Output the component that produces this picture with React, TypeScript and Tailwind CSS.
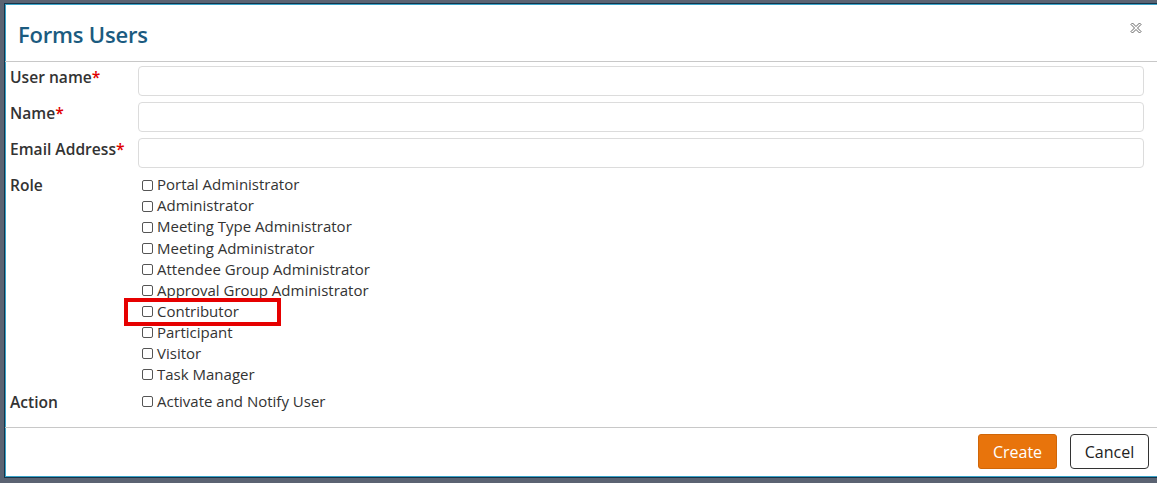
const roles = [
  "Portal Administrator",
  "Administrator",
  "Meeting Type Administrator",
  "Meeting Administrator",
  "Attendee Group Administrator",
  "Approval Group Administrator",
  "Contributor",
  "Participant",
  "Visitor",
  "Task Manager",
];

const Box = () => (
  <span className="inline-block w-[11px] h-[11px] border border-[#555] rounded-[2px] bg-white mr-[4px] mt-[1px] shrink-0" />
);

// outlined thick X, like the old jQuery UI close glyph
const CloseIcon = () => (
  <svg width="12" height="12" viewBox="0 0 12 12" fill="#fff" stroke="#666" strokeWidth="1" strokeLinejoin="round">
    <path d="M1 2.5 L2.5 1 L6 4.5 L9.5 1 L11 2.5 L7.5 6 L11 9.5 L9.5 11 L6 7.5 L2.5 11 L1 9.5 L4.5 6 Z" />
  </svg>
);

const Field = ({ label }: { label: string }) => (
  <div className="flex items-center h-[30px] mb-[6px]">
    <div className="w-[128px] font-semibold text-[15.6px] text-[#333] -mt-[6px]">
      {label}
      <span className="text-[#e00000]">*</span>
    </div>
    <div className="flex-1 h-[30px] border border-[#dcdcdc] rounded-[4px] mr-[19px]" />
  </div>
);

export default function App() {
  return (
    <div
      className="w-[1157px] h-[483px] bg-[#5b6372] overflow-hidden pt-[3px] pl-[4px]"
      style={{ fontFamily: '"Open Sans", "Noto Sans", sans-serif' }}
    >
      <div className="w-[1160px] h-[475px] bg-white border border-[#16344a] ring-1 ring-inset ring-[#3aa3c9] flex flex-col">
        {/* header */}
        <div className="h-[58px] flex items-center justify-between pl-[13px] pr-[14px] border-b border-[#c8c8c8] shrink-0">
          <h1 className="text-[22px] text-[#1b5b80] font-semibold tracking-[-0.2px] mt-[4px]">Forms Users</h1>
          <div className="mr-[7px] -mt-[10px]">
            <CloseIcon />
          </div>
        </div>

        {/* body */}
        <div className="pl-[5px] pt-[4px] flex-1">
          <Field label="User name" />
          <Field label="Name" />
          <Field label="Email Address" />

          <div className="flex mt-[6px]">
            <div className="w-[128px] font-semibold text-[15.6px] text-[#333] leading-[21px] pt-[1px]">Role</div>
            <div className="flex flex-col pl-[4px]">
              {roles.map((r) => (
                <div key={r} className="relative flex items-center h-[21.1px] text-[15px] text-[#333]">
                  {r === "Contributor" && (
                    <div className="absolute left-[-18px] top-[-3px] w-[157px] h-[28px] border-[4px] border-[#e60000]" />
                  )}
                  <Box />
                  <span>{r}</span>
                </div>
              ))}
            </div>
          </div>

          <div className="flex mt-[6px]">
            <div className="w-[128px] font-semibold text-[15.6px] text-[#333] leading-[21px] pt-[1px]">Action</div>
            <div className="flex items-center h-[21px] text-[15px] text-[#333] pl-[4px]">
              <Box />
              <span>Activate and Notify User</span>
            </div>
          </div>
        </div>

        {/* footer */}
        <div className="h-[50px] border-t border-[#c8c8c8] flex items-start justify-end gap-[13px] pt-[6px] pr-[14px] shrink-0">
          <button className="w-[79px] h-[35px] rounded-[3px] bg-[#e8740c] border border-[#d06608] text-white text-[16px]">
            Create
          </button>
          <button className="w-[79px] h-[35px] rounded-[4px] bg-white border border-[#333] text-[#222] text-[16px]">
            Cancel
          </button>
        </div>
      </div>
    </div>
  );
}
